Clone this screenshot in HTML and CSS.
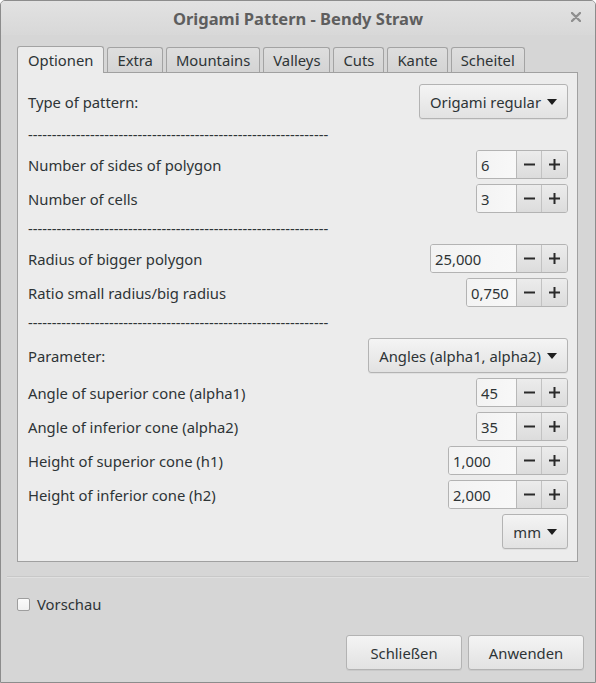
FILE: index.html
```html
<!DOCTYPE html>
<html>
<head>
<meta charset="utf-8">
<link rel="stylesheet" href="styles.css">
</head>
<body>
<div class="window">
  <div class="titlebar">
    <span class="title">Origami Pattern - Bendy Straw</span>
    <span class="close"><svg width="10" height="10" viewBox="0 0 10 10"><path d="M1 1L9 9M9 1L1 9" stroke="#8f8f8f" stroke-width="2.4" stroke-linecap="round"/></svg></span>
  </div>
  <div class="notebook">
    <div class="tabs">
      <div class="tab active">Optionen</div>
      <div class="tab">Extra</div>
      <div class="tab">Mountains</div>
      <div class="tab">Valleys</div>
      <div class="tab">Cuts</div>
      <div class="tab">Kante</div>
      <div class="tab">Scheitel</div>
    </div>
    <div class="panel">
      <div class="row combo-row">
        <span class="label">Type of pattern:</span>
        <div class="combo"><span>Origami regular</span><i class="arrow"></i></div>
      </div>
      <div class="dashes">---------------------------------------------------------------</div>
      <div class="row">
        <span class="label">Number of sides of polygon</span>
        <div class="spin"><span class="entry w40">6</span><span class="btn minus"><svg width="11" height="11" viewBox="0 0 11 11"><path d="M0 5.5H11" stroke="#2a2a2a" stroke-width="2"/></svg></span><span class="btn plus"><svg width="11" height="11" viewBox="0 0 11 11"><path d="M0 5.5H11M5.5 0V11" stroke="#2a2a2a" stroke-width="2"/></svg></span></div>
      </div>
      <div class="row">
        <span class="label">Number of cells</span>
        <div class="spin"><span class="entry w40">3</span><span class="btn minus"><svg width="11" height="11" viewBox="0 0 11 11"><path d="M0 5.5H11" stroke="#2a2a2a" stroke-width="2"/></svg></span><span class="btn plus"><svg width="11" height="11" viewBox="0 0 11 11"><path d="M0 5.5H11M5.5 0V11" stroke="#2a2a2a" stroke-width="2"/></svg></span></div>
      </div>
      <div class="dashes">---------------------------------------------------------------</div>
      <div class="row">
        <span class="label">Radius of bigger polygon</span>
        <div class="spin"><span class="entry w86">25,000</span><span class="btn minus"><svg width="11" height="11" viewBox="0 0 11 11"><path d="M0 5.5H11" stroke="#2a2a2a" stroke-width="2"/></svg></span><span class="btn plus"><svg width="11" height="11" viewBox="0 0 11 11"><path d="M0 5.5H11M5.5 0V11" stroke="#2a2a2a" stroke-width="2"/></svg></span></div>
      </div>
      <div class="row">
        <span class="label">Ratio small radius/big radius</span>
        <div class="spin"><span class="entry w50">0,750</span><span class="btn minus"><svg width="11" height="11" viewBox="0 0 11 11"><path d="M0 5.5H11" stroke="#2a2a2a" stroke-width="2"/></svg></span><span class="btn plus"><svg width="11" height="11" viewBox="0 0 11 11"><path d="M0 5.5H11M5.5 0V11" stroke="#2a2a2a" stroke-width="2"/></svg></span></div>
      </div>
      <div class="dashes">---------------------------------------------------------------</div>
      <div class="row combo-row">
        <span class="label">Parameter:</span>
        <div class="combo"><span>Angles (alpha1, alpha2)</span><i class="arrow"></i></div>
      </div>
      <div class="row">
        <span class="label">Angle of superior cone (alpha1)</span>
        <div class="spin"><span class="entry w40">45</span><span class="btn minus"><svg width="11" height="11" viewBox="0 0 11 11"><path d="M0 5.5H11" stroke="#2a2a2a" stroke-width="2"/></svg></span><span class="btn plus"><svg width="11" height="11" viewBox="0 0 11 11"><path d="M0 5.5H11M5.5 0V11" stroke="#2a2a2a" stroke-width="2"/></svg></span></div>
      </div>
      <div class="row">
        <span class="label">Angle of inferior cone (alpha2)</span>
        <div class="spin"><span class="entry w40">35</span><span class="btn minus"><svg width="11" height="11" viewBox="0 0 11 11"><path d="M0 5.5H11" stroke="#2a2a2a" stroke-width="2"/></svg></span><span class="btn plus"><svg width="11" height="11" viewBox="0 0 11 11"><path d="M0 5.5H11M5.5 0V11" stroke="#2a2a2a" stroke-width="2"/></svg></span></div>
      </div>
      <div class="row">
        <span class="label">Height of superior cone (h1)</span>
        <div class="spin"><span class="entry w68">1,000</span><span class="btn minus"><svg width="11" height="11" viewBox="0 0 11 11"><path d="M0 5.5H11" stroke="#2a2a2a" stroke-width="2"/></svg></span><span class="btn plus"><svg width="11" height="11" viewBox="0 0 11 11"><path d="M0 5.5H11M5.5 0V11" stroke="#2a2a2a" stroke-width="2"/></svg></span></div>
      </div>
      <div class="row">
        <span class="label">Height of inferior cone (h2)</span>
        <div class="spin"><span class="entry w68">2,000</span><span class="btn minus"><svg width="11" height="11" viewBox="0 0 11 11"><path d="M0 5.5H11" stroke="#2a2a2a" stroke-width="2"/></svg></span><span class="btn plus"><svg width="11" height="11" viewBox="0 0 11 11"><path d="M0 5.5H11M5.5 0V11" stroke="#2a2a2a" stroke-width="2"/></svg></span></div>
      </div>
      <div class="row combo-row">
        <span class="label"></span>
        <div class="combo"><span>mm</span><i class="arrow"></i></div>
      </div>
    </div>
  </div>
  <div class="separator"></div>
  <label class="check"><span class="box"></span><span>Vorschau</span></label>
  <div class="actions">
    <div class="button">Schließen</div>
    <div class="button">Anwenden</div>
  </div>
</div>
</body>
</html>
```

FILE: styles.css
```css
* { box-sizing: border-box; }
html, body { margin: 0; padding: 0; }
body {
  width: 596px;
  height: 683px;
  font-family: "Noto Sans", "Open Sans", sans-serif;
  font-size: 14.8px;
  color: #2e3436;
}
.window {
  width: 596px;
  height: 683px;
  border: 1px solid #8c8c8c;
  border-radius: 5px 5px 0 0;
  background: #d6d6d6;
  display: flex;
  flex-direction: column;
}
.titlebar {
  height: 34px;
  display: flex;
  align-items: center;
  justify-content: center;
  position: relative;
  background: linear-gradient(#e2e2e2, #d8d8d8);
  border-radius: 4px 4px 0 0;
}
.title {
  font-weight: bold;
  font-size: 16.5px;
  color: #5e5e5e;
}
.close {
  position: absolute;
  right: 14px;
  top: 11px;
  width: 10px;
  height: 10px;
  display: flex;
}
.notebook {
  margin: 11px 17px 0 16px;
}
.tabs {
  display: flex;
  align-items: flex-end;
  gap: 3px;
  height: 26px;
}
.tab {
  height: 25px;
  padding: 0 9px;
  border: 1px solid #a3a3a3;
  border-bottom: none;
  border-radius: 3px 3px 0 0;
  background: linear-gradient(#dedede, #d4d4d4);
  display: flex;
  align-items: center;
}
.tab.active {
  height: 27px;
  margin-bottom: -1px;
  padding: 0 10px;
  background: #ececec;
  position: relative;
  z-index: 1;
}
.panel {
  border: 1px solid #a0a0a0;
  background: #ececec;
  padding: 11px 9px 12px 10px;
  display: flex;
  flex-direction: column;
  gap: 5px;
}
.row {
  height: 29px;
  display: flex;
  align-items: center;
  justify-content: space-between;
}
.combo-row { height: 35px; }
.dashes {
  height: 21px;
  line-height: 21px;
  white-space: nowrap;
  overflow: hidden;
}
.combo {
  height: 35px;
  padding: 0 10px 0 10px;
  border: 1px solid #b3b3b3;
  border-radius: 3px;
  background: linear-gradient(#f4f4f4, #e2e2e2);
  box-shadow: 0 1px 0 rgba(0,0,0,0.05);
  display: flex;
  align-items: center;
  gap: 6px;
}
.arrow {
  width: 0;
  height: 0;
  border-left: 5.5px solid transparent;
  border-right: 5.5px solid transparent;
  border-top: 6px solid #1e1e1e;
  margin-top: 1px;
}
.spin {
  height: 29px;
  display: flex;
  border: 1px solid #b3b3b3;
  border-radius: 3px;
  overflow: hidden;
}
.entry {
  height: 100%;
  padding-left: 4px;
  display: flex;
  align-items: center;
  background: linear-gradient(90deg, #f3f3f3, #f8f8f8);
  border-right: 1px solid #b8b8b8;
}
.w40 { width: 40px; }
.w50 { width: 50px; }
.w68 { width: 68px; }
.w86 { width: 86px; }
.btn {
  width: 25px;
  height: 100%;
  display: flex;
  align-items: center;
  justify-content: center;
  background: linear-gradient(#ececec, #dcdcdc);
}
.btn.minus { border-right: 1px solid #c2c2c2; }
.separator {
  margin: 14px 6px 0 6px;
  border-top: 1px solid #c8c8c8;
  border-bottom: 1px solid #e0e0e0;
}
.check {
  margin: 18px 0 0 16px;
  display: flex;
  align-items: center;
  gap: 7px;
  height: 16px;
}
.box {
  width: 13px;
  height: 13px;
  border: 1px solid #9e9e9e;
  border-radius: 2px;
  background: linear-gradient(#fbfbfb, #f1f1f1);
}
.actions {
  margin-top: auto;
  margin-bottom: 12px;
  margin-right: 11px;
  display: flex;
  justify-content: flex-end;
  gap: 6px;
}
.button {
  width: 116px;
  height: 35px;
  border: 1px solid #b3b3b3;
  border-radius: 3px;
  background: linear-gradient(#f4f4f4, #e2e2e2);
  box-shadow: 0 1px 0 rgba(0,0,0,0.06);
  display: flex;
  align-items: center;
  justify-content: center;
}
```
